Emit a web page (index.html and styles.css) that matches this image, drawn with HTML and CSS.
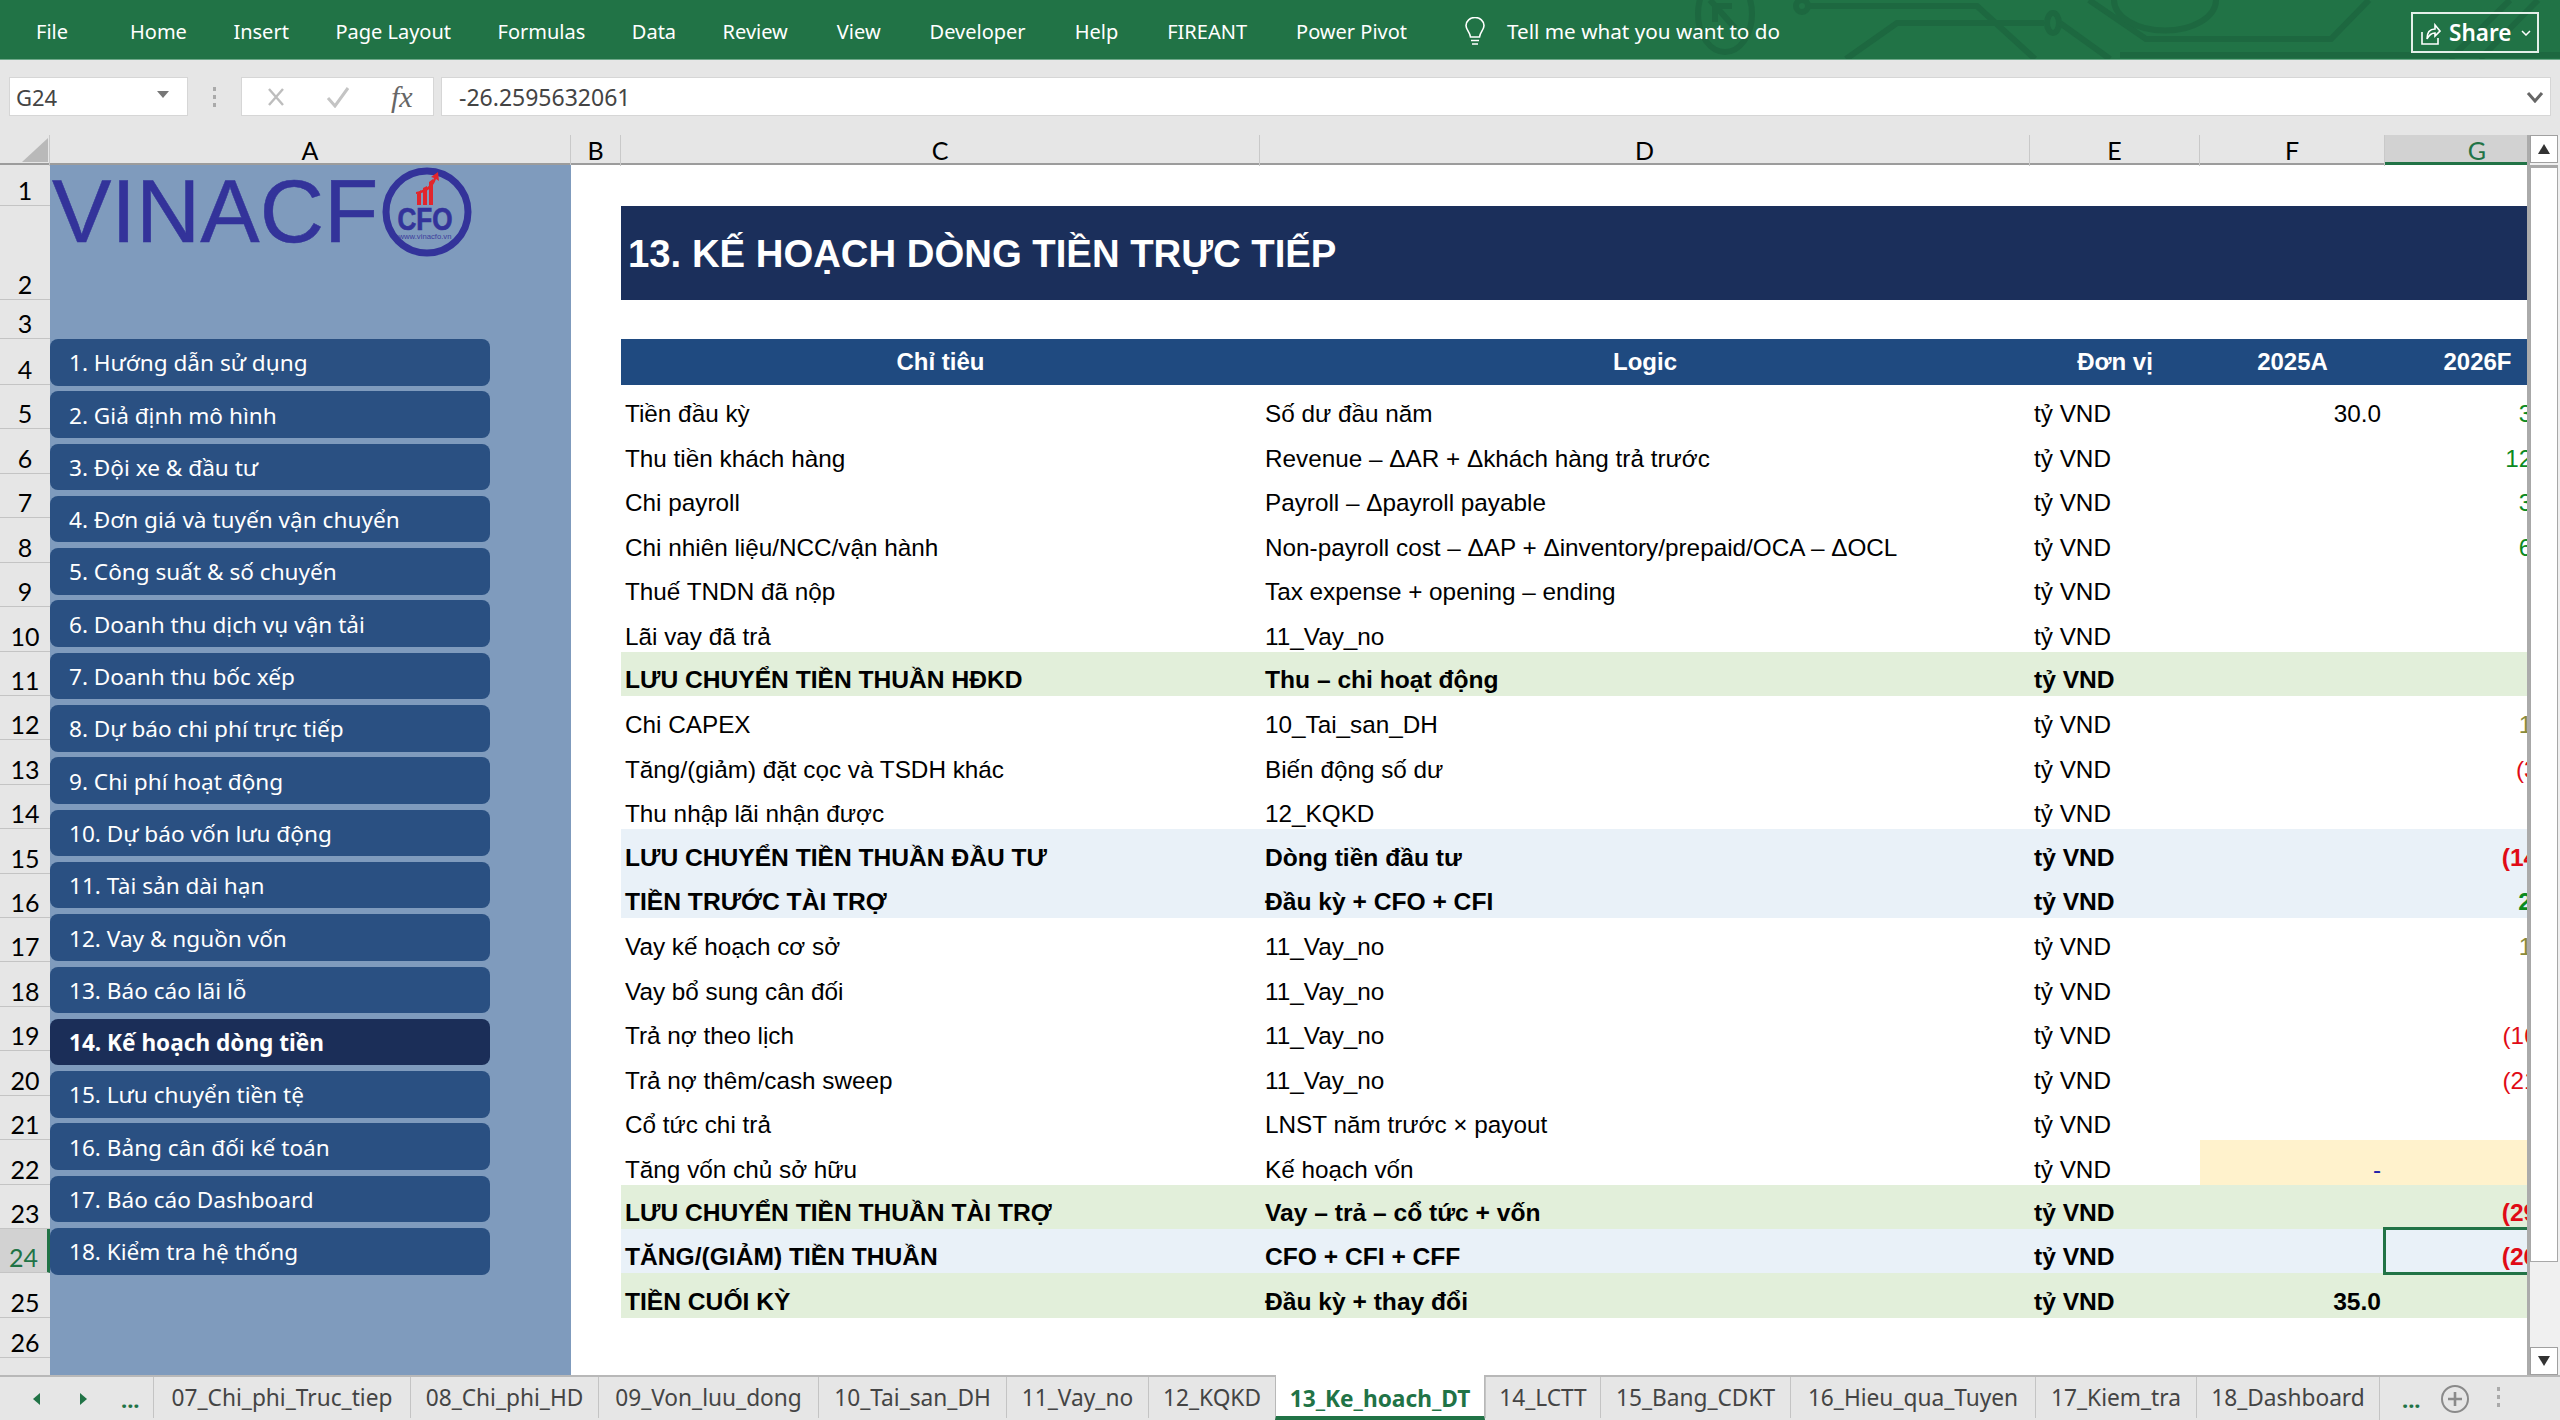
FILE: index.html
```html
<!DOCTYPE html>
<html lang="vi">
<head>
  <meta charset="UTF-8" />
  <title>13_Ke_hoach_DT - Excel</title>
  <link rel="stylesheet" href="styles.css">
</head>
<body>
  <header class="ribbon">
    <svg class="circuit" width="900" height="59" viewBox="0 0 900 59" fill="none">
      <g stroke="#1d6840" stroke-width="6">
        <ellipse cx="65" cy="14" rx="27" ry="38"/>
        <path d="M50 0 L75 28 M55 6 H72 M55 6 V22"/>
        <circle cx="142" cy="6" r="6"/>
        <path d="M148 6 H317 L375 59"/>
        <path d="M186 59 L237 23 H384"/>
        <ellipse cx="393" cy="23" rx="6" ry="10"/>
        <path d="M400 23 L450 59"/>
        <path d="M429 0 L486 39 H671 L709 0"/>
        <path d="M454 0 A50 30 0 0 0 556 0"/>
        <path d="M460 55 H900"/>
        <path d="M790 59 L850 0 M820 59 L878 0"/>
      </g>
    </svg>
    <nav class="tabs">
      <span>File</span><span>Home</span><span>Insert</span><span>Page Layout</span><span>Formulas</span><span>Data</span><span>Review</span><span>View</span><span>Developer</span><span>Help</span><span>FIREANT</span><span>Power Pivot</span>
    </nav>
    <svg class="bulb" width="22" height="30" viewBox="0 0 22 30" fill="none" stroke="#fff" stroke-width="1.6">
      <path d="M6.5 20 C6 15 2 13 2 8.5 A9 8 0 0 1 20 8.5 C20 13 16 15 15.5 20 Z"/>
      <path d="M7 23.5 H15 M8 27 H14"/>
    </svg>
    <span class="tell">Tell me what you want to do</span>
    <div class="share">
      <svg width="20" height="26" viewBox="0 0 20 26" fill="none" stroke="#fff" stroke-width="1.6">
        <path d="M1 12 V24 H17 V18"/>
        <path d="M6 19 C6 11 10 9 14 9 V5 L19 11 L14 16 V13 C10 13 8 15 6 19 Z"/>
      </svg>
      <span>Share</span>
      <svg width="10" height="6" viewBox="0 0 10 6" fill="none" stroke="#fff" stroke-width="1.5"><path d="M1 1 L5 5 L9 1"/></svg>
    </div>
  </header>

  <section class="formula-bar">
    <div class="name-box"><span>G24</span><i class="tri"></i></div>
    <div class="grip"></div>
    <div class="fx-box">
      <svg width="18" height="20" viewBox="0 0 18 20" fill="none" stroke="#bdbdbd" stroke-width="2.4"><path d="M2 2 L16 18 M16 2 L2 18"/></svg>
      <svg width="24" height="22" viewBox="0 0 24 22" fill="none" stroke="#c4c4c4" stroke-width="3"><path d="M2 12 L9 20 L22 2"/></svg>
      <em>fx</em>
    </div>
    <div class="formula">
      <span>-26.2595632061</span>
      <svg width="18" height="12" viewBox="0 0 18 12" fill="none" stroke="#666" stroke-width="3"><path d="M2 2 L9 10 L16 2"/></svg>
    </div>
  </section>

  <div class="workspace">
    <main class="sheet">
      <div class="col-heads">
        <div class="corner"><i></i></div>
        <div>A</div><div>B</div><div>C</div><div>D</div><div>E</div><div>F</div><div class="sel">G</div>
      </div>
      <div class="sheet-body">
        <div class="row-heads">
          <div class="r1">1</div><div class="r2">2</div><div class="r3">3</div><div class="r4">4</div>
          <div>5</div><div>6</div><div>7</div><div>8</div><div>9</div><div>10</div><div>11</div>
          <div>12</div><div>13</div><div>14</div><div>15</div><div>16</div><div>17</div><div>18</div>
          <div>19</div><div>20</div><div>21</div><div>22</div><div>23</div><div class="sel">24</div><div>25</div>
          <div class="r26">26</div><div class="r27">27</div>
        </div>

        <aside class="side">
          <span class="logo-text">VINACF</span>
          <svg class="logo-mark" width="92" height="92" viewBox="0 0 92 92">
            <circle cx="46" cy="46" r="41" fill="none" stroke="#33339a" stroke-width="7"/>
            <path d="M36 39 V28 L40 24 V39 Z M42 39 V22 L46 20 V39 Z M48 39 V16 L52 13 V39 Z" fill="#e2262c"/>
            <path d="M35 26 C44 24 50 20 53 12 L50 11 L57 6 L58 15 L55 13 C52 22 45 27 35 28 Z" fill="#e2262c"/>
            <text class="logo-cfo" x="44" y="64" text-anchor="middle" textLength="55" lengthAdjust="spacingAndGlyphs">CFO</text>
            <text class="logo-url" x="44" y="73" text-anchor="middle" textLength="53" lengthAdjust="spacingAndGlyphs">www.vinacfo.vn</text>
          </svg>
          <a class="btn">1. Hướng dẫn sử dụng</a>
          <a class="btn">2. Giả định mô hình</a>
          <a class="btn">3. Đội xe &amp; đầu tư</a>
          <a class="btn">4. Đơn giá và tuyến vận chuyển</a>
          <a class="btn">5. Công suất &amp; số chuyến</a>
          <a class="btn">6. Doanh thu dịch vụ vận tải</a>
          <a class="btn">7. Doanh thu bốc xếp</a>
          <a class="btn">8. Dự báo chi phí trực tiếp</a>
          <a class="btn">9. Chi phí hoạt động</a>
          <a class="btn">10. Dự báo vốn lưu động</a>
          <a class="btn">11. Tài sản dài hạn</a>
          <a class="btn">12. Vay &amp; nguồn vốn</a>
          <a class="btn">13. Báo cáo lãi lỗ</a>
          <a class="btn active">14. Kế hoạch dòng tiền</a>
          <a class="btn">15. Lưu chuyển tiền tệ</a>
          <a class="btn">16. Bảng cân đối kế toán</a>
          <a class="btn">17. Báo cáo Dashboard</a>
          <a class="btn">18. Kiểm tra hệ thống</a>
        </aside>

        <div class="report">
          <h1 class="title">13. KẾ HOẠCH DÒNG TIỀN TRỰC TIẾP</h1>
          <div class="row head"><div>Chỉ tiêu</div><div>Logic</div><div>Đơn vị</div><div>2025A</div><div>2026F</div></div>
          <div class="row"><div>Tiền đầu kỳ</div><div>Số dư đầu năm</div><div>tỷ VND</div><div class="num">30.0</div><div class="num pos">35.0</div></div>
          <div class="row"><div>Thu tiền khách hàng</div><div>Revenue – ΔAR + Δkhách hàng trả trước</div><div>tỷ VND</div><div class="num"></div><div class="num pos">122.4</div></div>
          <div class="row"><div>Chi payroll</div><div>Payroll – Δpayroll payable</div><div>tỷ VND</div><div class="num"></div><div class="num pos">35.2</div></div>
          <div class="row"><div>Chi nhiên liệu/NCC/vận hành</div><div>Non-payroll cost – ΔAP + Δinventory/prepaid/OCA – ΔOCL</div><div>tỷ VND</div><div class="num"></div><div class="num pos">61.8</div></div>
          <div class="row"><div>Thuế TNDN đã nộp</div><div>Tax expense + opening – ending</div><div>tỷ VND</div><div class="num"></div><div class="num"></div></div>
          <div class="row"><div>Lãi vay đã trả</div><div>11_Vay_no</div><div>tỷ VND</div><div class="num"></div><div class="num"></div></div>
          <div class="row total green"><div>LƯU CHUYỂN TIỀN THUẦN HĐKD</div><div>Thu – chi hoạt động</div><div>tỷ VND</div><div class="num"></div><div class="num"></div></div>
          <div class="row"><div>Chi CAPEX</div><div>10_Tai_san_DH</div><div>tỷ VND</div><div class="num"></div><div class="num link">14.0</div></div>
          <div class="row"><div>Tăng/(giảm) đặt cọc và TSDH khác</div><div>Biến động số dư</div><div>tỷ VND</div><div class="num"></div><div class="num neg">(3.1)</div></div>
          <div class="row"><div>Thu nhập lãi nhận được</div><div>12_KQKD</div><div>tỷ VND</div><div class="num"></div><div class="num"></div></div>
          <div class="row total blue"><div>LƯU CHUYỂN TIỀN THUẦN ĐẦU TƯ</div><div>Dòng tiền đầu tư</div><div>tỷ VND</div><div class="num"></div><div class="num neg">(14.2)</div></div>
          <div class="row total blue"><div>TIỀN TRƯỚC TÀI TRỢ</div><div>Đầu kỳ + CFO + CFI</div><div>tỷ VND</div><div class="num"></div><div class="num pos">24.0</div></div>
          <div class="row"><div>Vay kế hoạch cơ sở</div><div>11_Vay_no</div><div>tỷ VND</div><div class="num"></div><div class="num link">14.0</div></div>
          <div class="row"><div>Vay bổ sung cân đối</div><div>11_Vay_no</div><div>tỷ VND</div><div class="num"></div><div class="num"></div></div>
          <div class="row"><div>Trả nợ theo lịch</div><div>11_Vay_no</div><div>tỷ VND</div><div class="num"></div><div class="num neg">(16.0)</div></div>
          <div class="row"><div>Trả nợ thêm/cash sweep</div><div>11_Vay_no</div><div>tỷ VND</div><div class="num"></div><div class="num neg">(21.5)</div></div>
          <div class="row"><div>Cổ tức chi trả</div><div>LNST năm trước × payout</div><div>tỷ VND</div><div class="num"></div><div class="num"></div></div>
          <div class="row"><div>Tăng vốn chủ sở hữu</div><div>Kế hoạch vốn</div><div>tỷ VND</div><div class="num input"><span class="dash">-</span></div><div class="num input"></div></div>
          <div class="row total green"><div>LƯU CHUYỂN TIỀN THUẦN TÀI TRỢ</div><div>Vay – trả – cổ tức + vốn</div><div>tỷ VND</div><div class="num"></div><div class="num neg">(29.0)</div></div>
          <div class="row total blue"><div>TĂNG/(GIẢM) TIỀN THUẦN</div><div>CFO + CFI + CFF</div><div>tỷ VND</div><div class="num"></div><div class="num neg selected">(26.3)</div></div>
          <div class="row total green"><div>TIỀN CUỐI KỲ</div><div>Đầu kỳ + thay đổi</div><div>tỷ VND</div><div class="num">35.0</div><div class="num"></div></div>
        </div>
      </div>
    </main>

    <div class="vscroll">
      <div class="sb-btn"><i class="up"></i></div>
      <div class="sb-thumb"></div>
      <div class="sb-track"></div>
      <div class="sb-btn"><i class="down"></i></div>
    </div>
  </div>

  <footer class="tabbar">
    <div class="tab-nav">
      <i class="arrow left"></i><i class="arrow right"></i><b>...</b>
    </div>
    <div class="sheet-tabs">
      <div>07_Chi_phi_Truc_tiep</div>
      <div>08_Chi_phi_HD</div>
      <div>09_Von_luu_dong</div>
      <div>10_Tai_san_DH</div>
      <div>11_Vay_no</div>
      <div>12_KQKD</div>
      <div class="current">13_Ke_hoach_DT</div>
      <div>14_LCTT</div>
      <div>15_Bang_CDKT</div>
      <div>16_Hieu_qua_Tuyen</div>
      <div>17_Kiem_tra</div>
      <div>18_Dashboard</div>
    </div>
    <div class="tab-end">
      <b>...</b>
      <svg width="30" height="30" viewBox="0 0 30 30" fill="none" stroke="#8a8a8a" stroke-width="2"><circle cx="15" cy="15" r="13"/><path d="M15 8 V22 M8 15 H22" stroke-width="2.6"/></svg>
      <div class="grip"></div>
    </div>
  </footer>
</body>
</html>
```

FILE: styles.css
```css
* {
  box-sizing: border-box;
}
html, body {
  margin: 0;
  height: 1420px;
  overflow: hidden;
}
body {
  display: flex;
  flex-direction: column;
  font-family: "Noto Sans", sans-serif;
  background: #e6e6e6;
  color: #000;
}

/* ribbon */
.ribbon {
  position: relative;
  height: 60px;
  flex: none;
  display: flex;
  align-items: center;
  background: #217346;
  border-bottom: 1px solid #6fa98a;
  color: #fff;
  font-size: 20px;
  padding-left: 36px;
}
.circuit {
  position: absolute;
  left: 1660px;
  top: 0;
}
.tabs {
  position: relative;
  display: flex;
  gap: 46.5px;
  width: 1428px;
  padding-top: 4px;
}
.tabs span:first-child {
  margin-right: 15.5px;
}
.tabs span:nth-child(n+8) {
  margin-left: 2.5px;
}
.bulb {
  position: relative;
  margin-top: 4px;
}
.tell {
  position: relative;
  margin-left: 21px;
  padding-top: 3px;
  font-size: 20.7px;
}
.share {
  position: absolute;
  left: 2411px;
  top: 12px;
  width: 128px;
  height: 41px;
  border: 2px solid #e4efe9;
  display: flex;
  align-items: center;
  padding-left: 8px;
  font-size: 22.5px;
  font-weight: 600;
}
.share span {
  margin: 0 10px 0 8px;
}

/* formula bar */
.formula-bar {
  height: 75px;
  flex: none;
  display: flex;
  padding: 17px 9px 19px 9px;
  font-size: 22px;
  color: #444;
}
.formula-bar > div {
  height: 39px;
}
.name-box, .fx-box, .formula {
  display: flex;
  align-items: center;
  background: #fff;
  border: 1px solid #d6d6d6;
}
.name-box {
  width: 179px;
  padding: 0 10px 0 6px;
  justify-content: space-between;
}
.tri {
  width: 0;
  height: 0;
  border-left: 6px solid transparent;
  border-right: 6px solid transparent;
  border-top: 7px solid #777;
  margin-right: 8px;
  margin-bottom: 4px;
}
.grip {
  width: 3px;
  height: 20px;
  background: repeating-linear-gradient(#aaa 0 4px, transparent 4px 8px);
}
.formula-bar > .grip {
  height: 20px;
  margin: 10px 25px 0 25px;
}
.fx-box {
  width: 193px;
  padding-left: 25px;
  gap: 41px;
}
.fx-box em {
  font-family: "Liberation Serif", serif;
  font-size: 30px;
  color: #666;
}
.formula {
  flex: 1;
  margin-left: 7px;
  justify-content: space-between;
  padding: 0 6px 0 17px;
  font-size: 23px;
}

/* sheet frame */
.workspace {
  flex: 1;
  display: flex;
  min-height: 0;
}
.sheet {
  width: 2527px;
  overflow: hidden;
  background: #fff;
  display: flex;
  flex-direction: column;
}
.col-heads {
  flex: none;
  width: 2570px;
  height: 30px;
  display: grid;
  grid-template-columns: 50px 521px 50px 639px 770px 170px 185px 185px;
  background: #e6e6e6;
  border-bottom: 2px solid #9c9c9c;
  font-family: Lato, sans-serif;
  font-size: 25px;
  line-height: 31px;
  text-align: center;
}
.col-heads > div {
  border-right: 1px solid #c9c9c9;
}
.col-heads .sel {
  background: #d2d2d2;
  color: #217346;
  border-bottom: 3px solid #217346;
  height: 30px;
}
.corner {
  position: relative;
}
.corner i {
  position: absolute;
  left: 22px;
  top: 3px;
  width: 26px;
  height: 24px;
  background: #b9b9b9;
  clip-path: polygon(100% 0, 100% 100%, 0 100%);
}
.sheet-body {
  flex: 1;
  display: flex;
  width: 2570px;
  min-height: 0;
}

/* row numbers */
.row-heads {
  flex: none;
  width: 50px;
  overflow: hidden;
  background: #e6e6e6;
  font-family: Lato, sans-serif;
  font-size: 25px;
  text-align: center;
}
.row-heads > div {
  height: 44.43px;
  border-bottom: 1px solid #c4c4c4;
  display: flex;
  align-items: flex-end;
  justify-content: center;
  line-height: 30px;
}
.row-heads .r1 { height: 41px; }
.row-heads .r2 { height: 94px; }
.row-heads .r3 { height: 39px; }
.row-heads .r4 { height: 46px; }
.row-heads .r26 { height: 40px; }
.row-heads .r27 { height: 44px; }
.row-heads .sel {
  background: #d2d2d2;
  color: #217346;
  border-right: 3px solid #217346;
}

/* left menu */
.side {
  position: relative;
  flex: none;
  width: 521px;
  background: #7f9bbd;
  padding-top: 174px;
  display: flex;
  flex-direction: column;
  gap: 5.8px;
}
.logo-text {
  position: absolute;
  left: 2px;
  top: -5px;
  font-family: "Liberation Sans", sans-serif;
  font-size: 89px;
  line-height: 102px;
  color: #33339a;
  -webkit-text-stroke: 0.5px #33339a;
}
.logo-mark {
  position: absolute;
  left: 331px;
  top: 1px;
}
.logo-cfo {
  font-family: "Liberation Sans", sans-serif;
  font-weight: 700;
  font-size: 31px;
  fill: #33339a;
  stroke: #33339a;
  stroke-width: 0.7;
}
.logo-url {
  font-family: "Liberation Sans", sans-serif;
  font-size: 8px;
  fill: #3d3d9c;
}
.btn {
  width: 440px;
  height: 46.5px;
  flex: none;
  background: #2a5082;
  border-radius: 8px;
  color: #fff;
  font-size: 22.6px;
  display: flex;
  align-items: center;
  padding-left: 19px;
  padding-top: 1px;
}
.btn.active {
  background: #1b2e58;
  font-weight: 700;
}

/* report table */
.report {
  flex: none;
  width: 1999px;
  padding: 41px 0 0 50px;
  font-family: "Liberation Sans", sans-serif;
  font-size: 24.3px;
}
.title {
  margin: 0 0 39px;
  height: 94px;
  background: #1b2f5b;
  color: #fff;
  font-size: 38.3px;
  font-weight: 700;
  line-height: 96px;
  padding-left: 7px;
  overflow: hidden;
}
.row {
  display: grid;
  grid-template-columns: 639px 770px 170px 185px 185px;
  height: 44.43px;
  line-height: 30px;
}
.row > div {
  display: flex;
  align-items: flex-end;
  padding: 0 4px 0 4px;
  white-space: nowrap;
}
.row > div:nth-child(2) { padding-left: 5px; }
.row > .num {
  justify-content: flex-end;
}
.row.head {
  height: 46px;
  background: #1f4a80;
  color: #fff;
  font-size: 24px;
  font-weight: 700;
}
.row.head > div {
  align-items: center;
  justify-content: center;
  padding: 0;
}
.total {
  font-weight: 700;
  font-size: 24.6px;
}
.total > div {
  padding-bottom: 1px;
}
.green { background: #e2efda; }
.blue { background: #e9f1f8; }
.pos { color: #0b8a1f; }
.neg { color: #e00b16; }
.link { color: #8a8a3a; }
.input { background: #fff2cc; }
.dash { color: #2222aa; }
.selected {
  position: relative;
  outline: 3px solid #217346;
  outline-offset: -1px;
}

/* scrollbar */
.vscroll {
  flex: 1;
  display: flex;
  flex-direction: column;
  background: #f0f0f0;
  border-left: 3px solid #ababab;
  padding-right: 2px;
}
.sb-btn {
  height: 28px;
  flex: none;
  background: #fff;
  border: 1px solid #a0a0a0;
  display: flex;
  align-items: center;
  justify-content: center;
}
.sb-btn i {
  width: 0;
  height: 0;
  border-left: 6px solid transparent;
  border-right: 6px solid transparent;
}
.up { border-bottom: 10px solid #333; }
.down { border-top: 10px solid #333; }
.sb-thumb {
  height: 1097px;
  flex: none;
  margin-top: 2px;
  background: #fff;
  border: 1px solid #a8a8a8;
  border-top-width: 3px;
}
.sb-track {
  flex: 1;
}

/* sheet tabs */
.tabbar {
  height: 45px;
  flex: none;
  display: flex;
  border-top: 2px solid #b8b8b8;
  font-size: 22.7px;
  color: #444;
}
.tab-nav {
  width: 153px;
  flex: none;
  display: flex;
  align-items: center;
  padding-left: 33px;
}
.tab-nav b, .tab-end b {
  color: #217346;
  font-size: 22px;
}
.arrow {
  width: 0;
  height: 0;
  border-top: 6px solid transparent;
  border-bottom: 6px solid transparent;
}
.arrow.left {
  border-right: 7px solid #217346;
}
.arrow.right {
  margin: 0 34px 0 40px;
  border-left: 7px solid #217346;
}
.sheet-tabs {
  flex: none;
  display: grid;
  grid-template-columns: 257px 188px 220px 188px 142px 127px 210px 115px 190px 245px 161px 183px;
}
.sheet-tabs > div {
  display: flex;
  align-items: center;
  justify-content: center;
  border-left: 1px solid #c4c4c4;
  margin-bottom: 2px;
  white-space: nowrap;
}
.sheet-tabs .current {
  margin-top: -2px;
  margin-bottom: 0;
  padding-top: 5px;
  background: #fff;
  color: #217346;
  font-weight: 700;
  border-left: 1px solid #b8b8b8;
  border-right: 1px solid #b8b8b8;
  border-bottom: 4px solid #217346;
}
.tab-end {
  flex: 1;
  display: flex;
  align-items: center;
  border-left: 1px solid #c4c4c4;
  padding-left: 22px;
  gap: 19px;
}
.tab-end .grip {
  margin: 0 0 0 8px;
  height: 24px;
}
```
